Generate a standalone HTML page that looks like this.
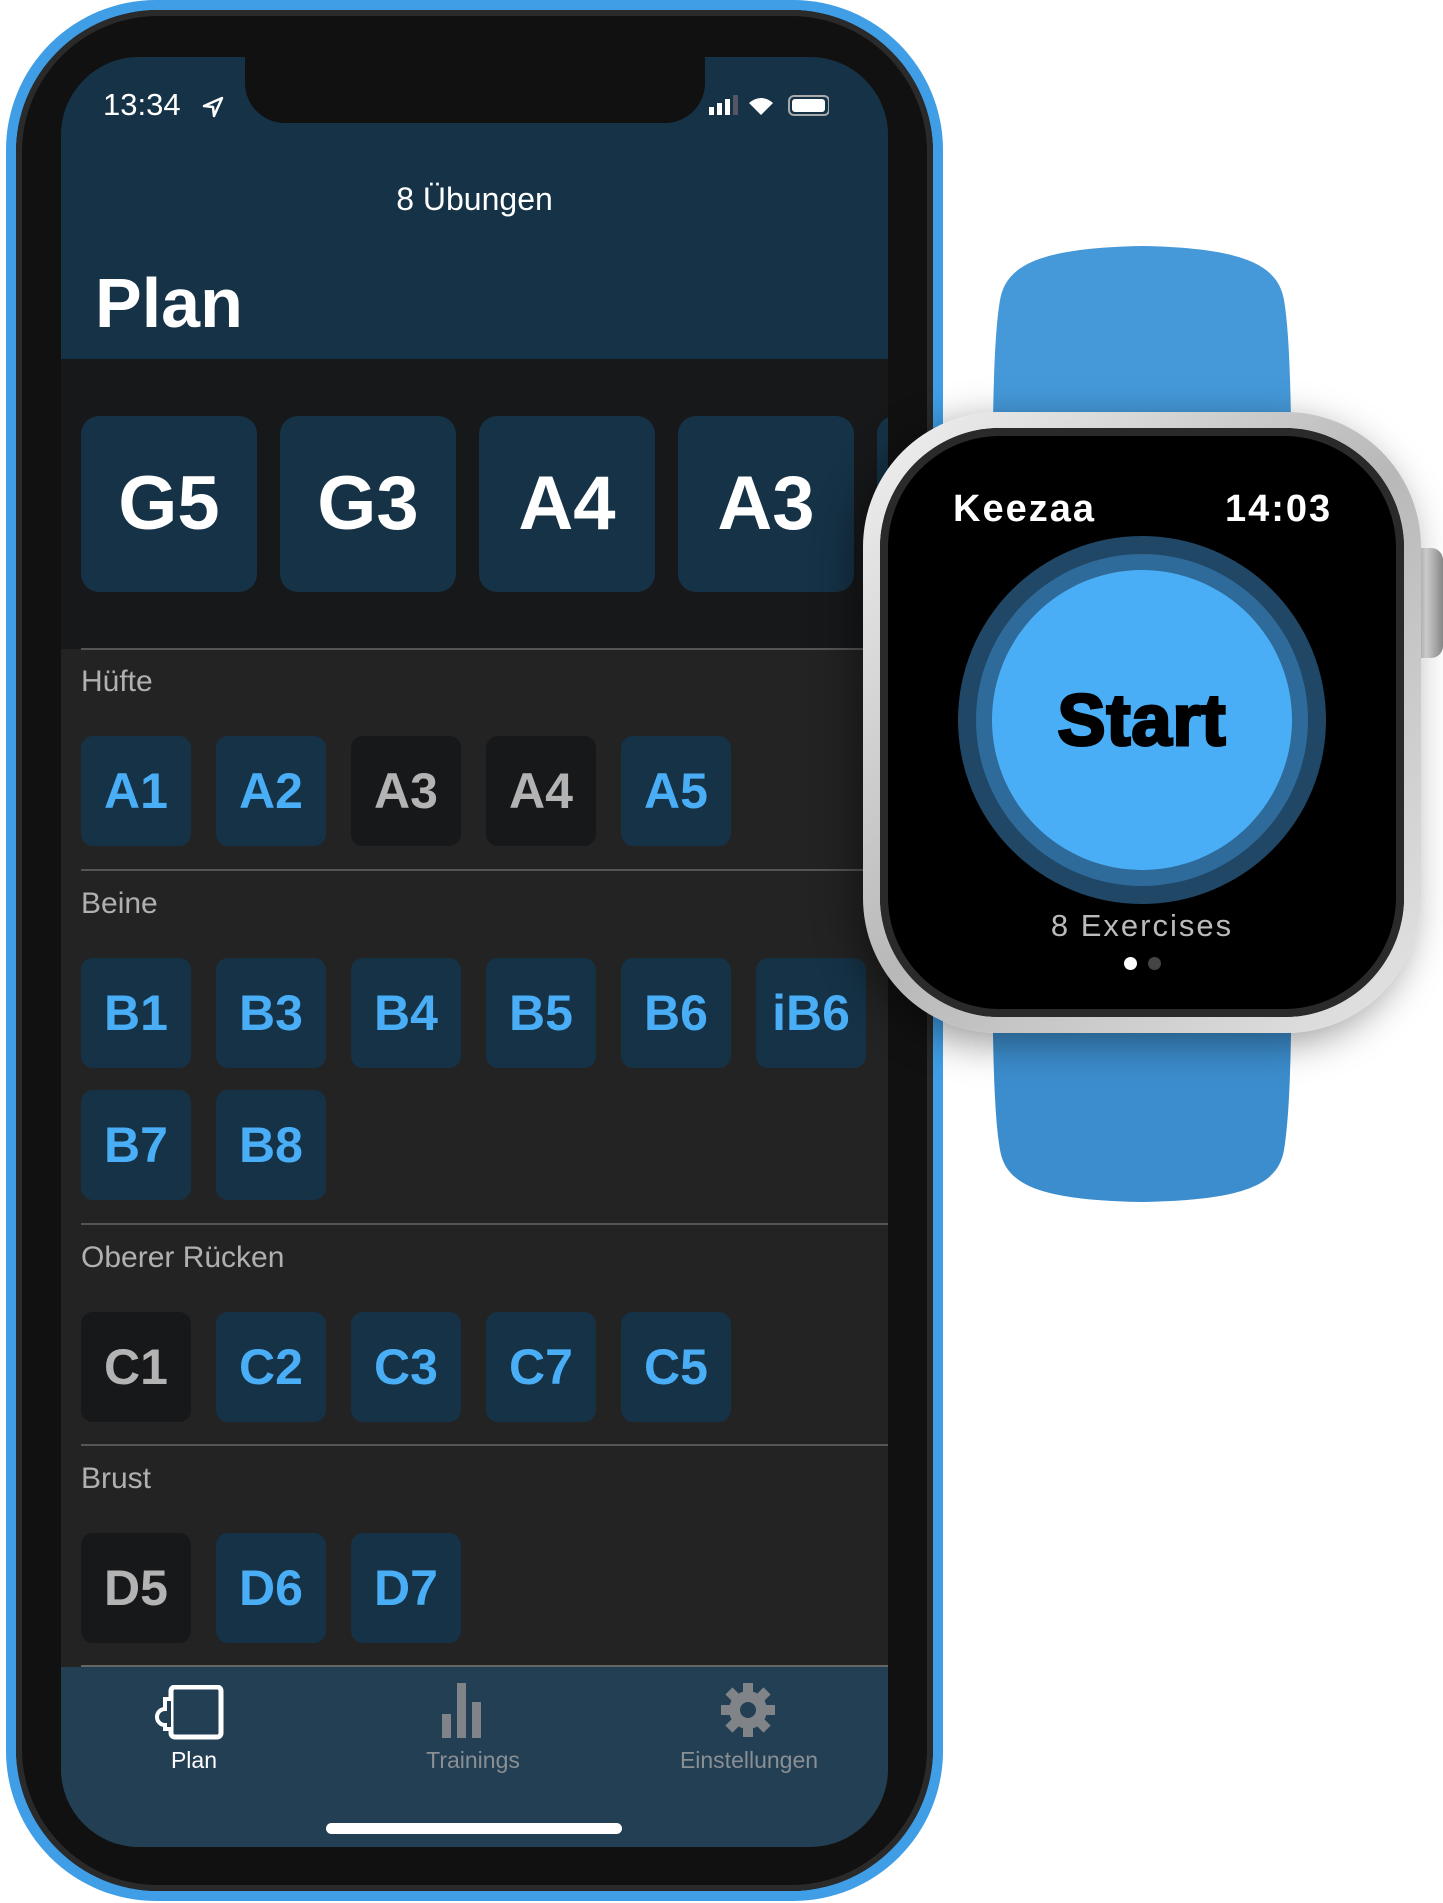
<!DOCTYPE html>
<html><head><meta charset="utf-8"><style>
*{margin:0;padding:0;box-sizing:border-box}
body{width:1443px;height:1903px;background:#fff;position:relative;overflow:hidden;font-family:"Liberation Sans",sans-serif}
.abs{position:absolute}
.phone{left:6px;top:0;width:937px;height:1901px;border-radius:150px;background:#3f9ee6;}
.phone2{left:16px;top:10px;width:917px;height:1881px;border-radius:142px;background:#111;box-shadow:inset 0 0 0 6px #2a2a2a}
.screen{left:61px;top:57px;width:827px;height:1790px;border-radius:78px;background:#232323;overflow:hidden}
.hdr{left:0;top:0;width:827px;height:302px;background:#153246}
.notch{left:184px;top:-2px;width:460px;height:68px;background:#111;border-radius:0 0 40px 40px}
.big{position:absolute;top:359px;width:176px;height:176px;border-radius:18px;background:#153246;color:#fff;font-weight:bold;font-size:76px;text-align:center;line-height:176px}
.sm{position:absolute;width:110px;height:110px;border-radius:12px;background:#153246;color:#4aaef7;font-weight:bold;font-size:50px;text-align:center;line-height:110px}
.g{background:#17181a;color:#b3b3b3}
.sep{position:absolute;left:20px;right:0;height:2px;background:#555}
.lbl{position:absolute;left:20px;color:#b0b0b0;font-size:30px}
.tab{position:absolute;top:1610px;left:0;width:827px;height:180px;background:#233f53}
.tl{position:absolute;top:1690px;font-size:23px;color:#8a8f94;text-align:center;width:200px}
</style></head><body>
<div class="abs phone"></div>
<div class="abs phone2"></div>
<div class="abs screen">
 <div class="abs hdr"></div>
 <div class="abs notch"></div>
 <div class="abs" style="left:42px;top:30px;color:#fff;font-size:31px">13:34</div>
 <svg class="abs" style="left:140px;top:38px" width="24" height="24"><path d="M3 11 L21 3 L13 21 L12 12 Z" fill="none" stroke="#fff" stroke-width="2.5" stroke-linejoin="round"/></svg>
 <div class="abs" style="left:648px;top:38px;width:22px;height:16px"><svg width="120" height="30"><rect x="0" y="12" width="5" height="8" fill="#fff"/><rect x="8" y="8" width="5" height="12" fill="#fff"/><rect x="16" y="4" width="5" height="16" fill="#fff"/><rect x="24" y="0" width="5" height="20" fill="#556"/><path d="M40 8 Q52 -2 64 8 L52 20Z" fill="#fff"/><rect x="80" y="1" width="40" height="19" rx="5" fill="none" stroke="#aaa" stroke-width="2"/><rect x="83" y="4" width="33" height="13" rx="3" fill="#fff"/></svg></div>
 <div class="abs" style="left:0;width:827px;top:124px;text-align:center;color:#fff;font-size:32px">8 Übungen</div>
 <div class="abs" style="left:34px;top:206px;color:#fff;font-size:70px;font-weight:bold">Plan</div>
 <div class="abs" style="left:0;top:302px;width:827px;height:290px;background:#17181a"></div>
 <div class="big" style="left:20px">G5</div>
 <div class="big" style="left:219px">G3</div>
 <div class="big" style="left:418px">A4</div>
 <div class="big" style="left:617px">A3</div>
 <div class="big" style="left:816px"></div>
 <div class="sep" style="top:591px"></div>
 <div class="lbl" style="top:608px">Hüfte</div>
 <div class="sm" style="left:20px;top:679px">A1</div><div class="sm" style="left:155px;top:679px">A2</div><div class="sm g" style="left:290px;top:679px">A3</div><div class="sm g" style="left:425px;top:679px">A4</div><div class="sm" style="left:560px;top:679px">A5</div>
 <div class="sep" style="top:812px"></div>
 <div class="lbl" style="top:830px">Beine</div>
 <div class="sm" style="left:20px;top:901px">B1</div><div class="sm" style="left:155px;top:901px">B3</div><div class="sm" style="left:290px;top:901px">B4</div><div class="sm" style="left:425px;top:901px">B5</div><div class="sm" style="left:560px;top:901px">B6</div><div class="sm" style="left:695px;top:901px">iB6</div>
 <div class="sm" style="left:20px;top:1033px">B7</div><div class="sm" style="left:155px;top:1033px">B8</div>
 <div class="sep" style="top:1166px"></div>
 <div class="lbl" style="top:1184px">Oberer Rücken</div>
 <div class="sm g" style="left:20px;top:1255px">C1</div><div class="sm" style="left:155px;top:1255px">C2</div><div class="sm" style="left:290px;top:1255px">C3</div><div class="sm" style="left:425px;top:1255px">C7</div><div class="sm" style="left:560px;top:1255px">C5</div>
 <div class="sep" style="top:1387px"></div>
 <div class="lbl" style="top:1405px">Brust</div>
 <div class="sm g" style="left:20px;top:1476px">D5</div><div class="sm" style="left:155px;top:1476px">D6</div><div class="sm" style="left:290px;top:1476px">D7</div>
 <div class="tab"></div>
 <div class="sep" style="top:1608px;background:#666"></div>
 <svg class="abs" style="left:90px;top:1628px" width="80" height="60"><rect x="20" y="2" width="50" height="50" rx="4" fill="none" stroke="#fff" stroke-width="5"/><path d="M20 14 H14 V24 A8 8 0 0 0 14 40 V44 H20" fill="#233f53" stroke="#fff" stroke-width="4"/></svg>
 <div class="tl" style="left:33px;color:#fff">Plan</div>
 <svg class="abs" style="left:378px;top:1623px" width="60" height="60"><rect x="3" y="34" width="9" height="24" fill="#808488"/><rect x="18" y="3" width="9" height="55" fill="#808488"/><rect x="33" y="22" width="9" height="36" fill="#808488"/></svg>
 <div class="tl" style="left:312px">Trainings</div>
 <svg class="abs" style="left:659px;top:1625px" width="60" height="60"><g transform="translate(28,28)" fill="#808488"><circle r="19"/><g><rect x="-5" y="-27" width="10" height="12"/><rect x="-5" y="15" width="10" height="12"/><rect x="-27" y="-5" width="12" height="10"/><rect x="15" y="-5" width="12" height="10"/><rect x="-5" y="-27" width="10" height="12" transform="rotate(45)"/><rect x="-5" y="-27" width="10" height="12" transform="rotate(-45)"/><rect x="-5" y="15" width="10" height="12" transform="rotate(45)"/><rect x="-5" y="15" width="10" height="12" transform="rotate(-45)"/></g><circle r="8" fill="#233f53"/></g></svg>
 <div class="tl" style="left:588px">Einstellungen</div>
 <div class="abs" style="left:265px;top:1766px;width:296px;height:11px;border-radius:6px;background:#fff"></div>
</div>
<!-- watch -->
<svg class="abs" style="left:900px;top:240px" width="500" height="980">
 <path d="M10 420 C50 395 80 370 88 320 C95 250 90 120 100 60 C106 25 140 8 242 6 C344 8 378 25 384 60 C394 120 389 250 396 320 C404 370 434 395 474 420 Z" fill="#4599d9"/>
 <path d="M10 560 C50 585 80 610 88 660 C95 730 90 850 100 910 C106 945 140 960 242 962 C344 960 378 945 384 910 C394 850 389 730 396 660 C404 610 434 585 474 560 Z" fill="#3c8dcd"/>
</svg>
<div class="abs" style="left:1409px;top:548px;width:34px;height:110px;border-radius:12px;background:linear-gradient(90deg,#999,#ddd,#888)"></div>
<div class="abs" style="left:863px;top:412px;width:558px;height:621px;border-radius:135px;background:linear-gradient(135deg,#f2f2f2,#b8b8b8 50%,#e5e5e5);box-shadow:-10px 10px 40px rgba(0,0,0,.4)"></div>
<div class="abs" style="left:880px;top:428px;width:524px;height:589px;border-radius:120px;background:#000;box-shadow:inset 0 0 0 8px #2a2a2a"></div>
<div class="abs" style="left:953px;top:488px;color:#fff;font-size:38px;font-weight:bold;letter-spacing:2px">Keezaa</div>
<div class="abs" style="left:1225px;top:488px;color:#fff;font-size:38px;font-weight:bold;letter-spacing:2px">14:03</div>
<div class="abs" style="left:958px;top:536px;width:368px;height:368px;border-radius:50%;background:#214766"></div>
<div class="abs" style="left:976px;top:554px;width:332px;height:332px;border-radius:50%;background:#2e6a9a"></div>
<div class="abs" style="left:992px;top:570px;width:300px;height:300px;border-radius:50%;background:#4aaef7"></div>
<div class="abs" style="left:958px;top:680px;width:368px;text-align:center;font-size:72px;font-weight:900;color:#000;-webkit-text-stroke:3px #000;letter-spacing:1px">Start</div>
<div class="abs" style="left:958px;top:908px;width:368px;text-align:center;font-size:31px;color:#bbb;letter-spacing:2px">8 Exercises</div>
<div class="abs" style="left:1124px;top:957px;width:13px;height:13px;border-radius:50%;background:#fff"></div>
<div class="abs" style="left:1148px;top:957px;width:13px;height:13px;border-radius:50%;background:#444"></div>
</body></html>
